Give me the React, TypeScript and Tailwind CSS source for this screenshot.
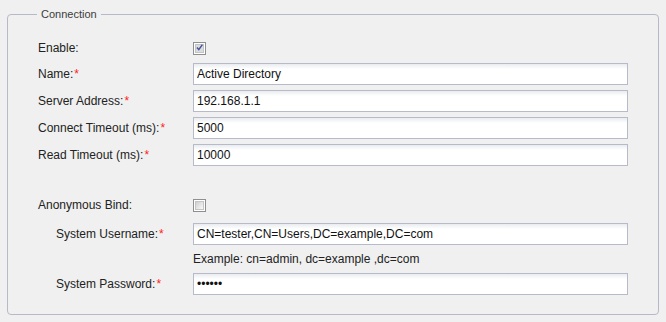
import React from 'react';

const FONT = { fontFamily: '"Liberation Sans", Arial, sans-serif' };

function Req() {
  return <span className="text-[#ff2020] ml-[1px]">*</span>;
}

function Check({ checked }: { checked?: boolean }) {
  return (
    <div className="w-[13px] h-[13px] border border-[#8e8f8f] bg-white p-[1px]">
      <div
        className={
          'w-full h-full border border-[#c4c4c4] flex items-center justify-center ' +
          (checked ? 'bg-[#dcdcdc]' : 'bg-gradient-to-br from-[#cfcfcf] to-[#fafafa]')
        }
      >
        {checked && (
          <svg width="9" height="9" viewBox="0 0 9 9" className="-mt-[1px]">
            <path d="M1.2 4.6 L3.6 7.2 L8.2 0.8" fill="none" stroke="#4556a0" strokeWidth="2" />
          </svg>
        )}
      </div>
    </div>
  );
}

function TextBox({ value, type = 'text' }: { value: string; type?: string }) {
  return (
    <input
      type={type}
      readOnly
      defaultValue={value}
      className="w-[435px] h-[22px] border border-[#b7bac9] bg-gradient-to-b from-[#e9ecef] via-white via-[25%] to-white px-[3px] text-[12px] text-[#111] outline-none"
    />
  );
}

function Row({
  label,
  required,
  indent,
  children,
  className = '',
}: {
  label: string;
  required?: boolean;
  indent?: boolean;
  children: React.ReactNode;
  className?: string;
}) {
  return (
    <div className={'flex items-center h-[22px] ' + className}>
      <div className={'w-[155px] shrink-0 text-[12px] text-[#222] ' + (indent ? 'pl-[18px]' : '')}>
        {label}
        {required && <Req />}
      </div>
      {children}
    </div>
  );
}

export default function App() {
  return (
    <div className="w-[666px] h-[322px] bg-[#f0f0f0] pt-[7px] px-[7px]" style={FONT}>
      <fieldset className="w-[652px] h-[308px] border border-[#b8b9c8] rounded-[4px]">
        <legend className="ml-[29px] px-[4px] text-[11px] leading-[15px] text-[#3c3c3c]">Connection</legend>
        <div className="pl-[30px] pt-[15px] flex flex-col">
          <Row label="Enable:" className="mb-[4px]">
            <Check checked />
          </Row>
          <Row label="Name:" required className="mb-[5px]">
            <TextBox value="Active Directory" />
          </Row>
          <Row label="Server Address:" required className="mb-[5px]">
            <TextBox value="192.168.1.1" />
          </Row>
          <Row label="Connect Timeout (ms):" required className="mb-[5px]">
            <TextBox value="5000" />
          </Row>
          <Row label="Read Timeout (ms):" required className="mb-[28px]">
            <TextBox value="10000" />
          </Row>
          <Row label="Anonymous Bind:" className="mb-[7px]">
            <Check />
          </Row>
          <Row label="System Username:" required indent>
            <TextBox value="CN=tester,CN=Users,DC=example,DC=com" />
          </Row>
          <div className="pl-[155px] h-[28px] flex items-center text-[12px] text-[#222]">
            Example: cn=admin, dc=example ,dc=com
          </div>
          <Row label="System Password:" required indent>
            <TextBox value="123456" type="password" />
          </Row>
        </div>
      </fieldset>
    </div>
  );
}
